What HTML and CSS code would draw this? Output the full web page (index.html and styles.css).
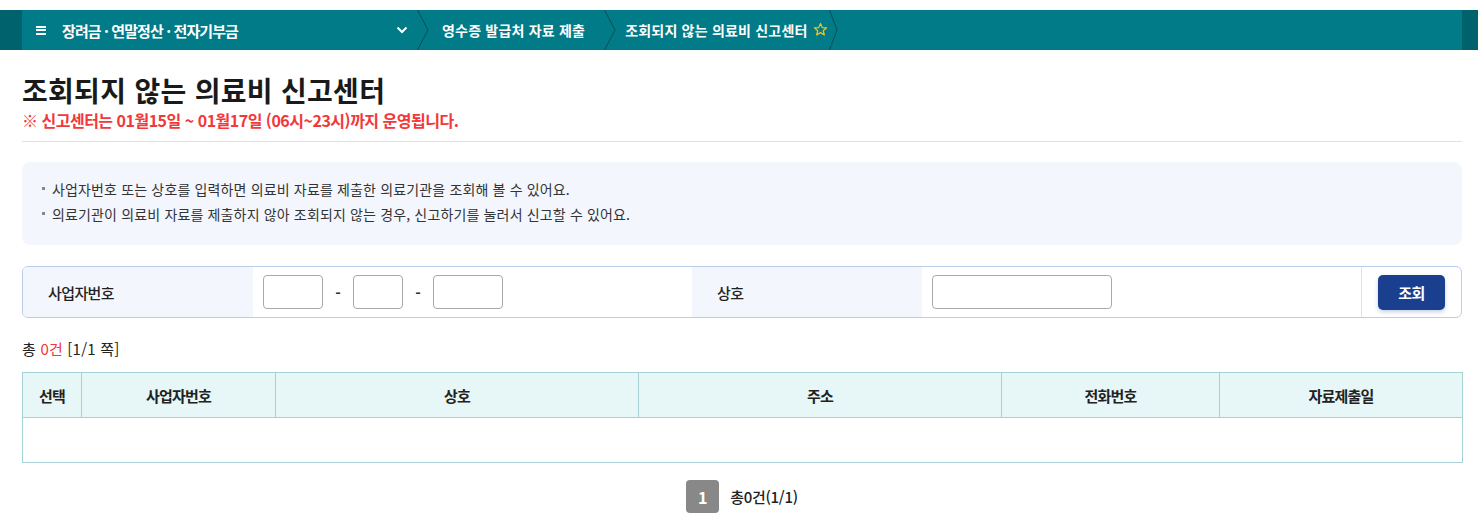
FILE: index.html
```html
<!DOCTYPE html>
<html lang="ko">
<head>
<meta charset="utf-8">
<title>조회되지 않는 의료비 신고센터</title>
<link rel="stylesheet" href="styles.css">
</head>
<body>
<div class="topbar">
  <nav class="crumbs">
    <div class="crumb crumb-menu">
      <span class="hamburger"><i></i><i></i><i></i></span>
      <span class="menu-title">장려금 · 연말정산 · 전자기부금</span>
      <svg class="caret" width="12" height="8" viewBox="0 0 12 8"><polyline points="1.5,1.5 6,6 10.5,1.5" fill="none" stroke="#fff" stroke-width="2"/></svg>
    </div>
    <svg class="sep" width="12" height="40" viewBox="0 0 12 40"><polyline points="0.5,0 11,20 0.5,40" fill="none" stroke="#0b4e58" stroke-width="1"/></svg>
    <div class="crumb crumb-2">영수증 발급처 자료 제출</div>
    <svg class="sep" width="12" height="40" viewBox="0 0 12 40"><polyline points="0.5,0 11,20 0.5,40" fill="none" stroke="#0b4e58" stroke-width="1"/></svg>
    <div class="crumb crumb-3">조회되지 않는 의료비 신고센터
      <svg class="star" width="15" height="15" viewBox="0 0 24 24"><polygon points="12,2.5 14.8,9 21.8,9.4 16.4,13.9 18.1,20.8 12,17 5.9,20.8 7.6,13.9 2.2,9.4 9.2,9" fill="none" stroke="#f6c21b" stroke-width="2" stroke-linejoin="round"/></svg>
    </div>
    <svg class="sep" width="12" height="40" viewBox="0 0 12 40"><polyline points="0.5,0 8,20 0.5,40" fill="none" stroke="#0b4e58" stroke-width="1"/></svg>
  </nav>
</div>

<main class="page">
  <h1 class="title">조회되지 않는 의료비 신고센터</h1>
  <p class="notice">※ 신고센터는 01월15일 ~ 01월17일 (06시~23시)까지 운영됩니다.</p>
  <hr class="rule">

  <ul class="info">
    <li>사업자번호 또는 상호를 입력하면 의료비 자료를 제출한 의료기관을 조회해 볼 수 있어요.</li>
    <li>의료기관이 의료비 자료를 제출하지 않아 조회되지 않는 경우, 신고하기를 눌러서 신고할 수 있어요.</li>
  </ul>

  <div class="search">
    <div class="label">사업자번호</div>
    <div class="field">
      <input class="in in-1" type="text">
      <span class="dash">-</span>
      <input class="in in-2" type="text">
      <span class="dash">-</span>
      <input class="in in-3" type="text">
    </div>
    <div class="label">상호</div>
    <div class="field">
      <input class="in in-name" type="text">
    </div>
    <div class="btn-cell"><button class="btn" type="button">조회</button></div>
  </div>

  <p class="count">총 <span class="red">0건</span> [1/1 쪽]</p>

  <table class="grid">
    <colgroup>
      <col class="c1"><col class="c2"><col class="c3"><col class="c4"><col class="c5"><col class="c6">
    </colgroup>
    <thead>
      <tr><th>선택</th><th>사업자번호</th><th>상호</th><th>주소</th><th>전화번호</th><th>자료제출일</th></tr>
    </thead>
    <tbody>
      <tr class="empty"><td colspan="6"></td></tr>
    </tbody>
  </table>

  <div class="pager">
    <span class="page-num">1</span>
    <span class="page-total">총0건(1/1)</span>
  </div>
</main>
</body>
</html>
```

FILE: styles.css
```css
* { box-sizing: border-box; }
html, body { margin: 0; padding: 0; background: #fff; }
body {
  font-family: "Noto Sans CJK KR", "Noto Sans", sans-serif;
  color: #222;
}

.topbar {
  margin-top: 10px;
  height: 40px;
  background: #00626c;
  padding: 0 16px 0 22px;
}
.crumbs {
  height: 40px;
  background: #007b87;
  display: flex;
  align-items: center;
  color: #fff;
}
.crumb {
  display: flex;
  align-items: center;
  height: 40px;
  white-space: nowrap;
  font-size: 14px;
  font-weight: 700;
  letter-spacing: 0.2px;
}
.crumb-menu { width: 395px; padding-left: 14px; }
.hamburger {
  display: flex;
  flex-direction: column;
  justify-content: space-between;
  width: 10px;
  height: 9px;
  margin-right: 16px;
}
.hamburger i { display: block; height: 2px; background: #fff; }
.menu-title { font-size: 15px; letter-spacing: -0.9px; flex: 1; }
.caret { margin-right: 9px; }
.sep { flex: none; display: block; }
.crumb-2 { padding: 0 19px 0 13px; }
.crumb-3 { padding: 0 1px 0 9px; }
.star { margin-left: 5px; margin-top: -2px; }

.page { width: 1440px; margin-left: 22px; }

.title {
  margin: 21px 0 0;
  font-size: 28px;
  line-height: 38px;
  font-weight: 700;
  color: #1a1a1a;
  letter-spacing: 0.3px;
}
.notice {
  margin: 0;
  font-size: 16px;
  line-height: 22px;
  font-weight: 700;
  color: #f2383a;
  letter-spacing: -0.5px;
}
.rule {
  margin: 10px 0 0;
  border: 0;
  border-top: 1px solid #e2e2e2;
  height: 0;
}

.info {
  list-style: none;
  margin: 20px 0 0;
  padding: 15px 20px 18px;
  background: #f3f6fd;
  border-radius: 8px;
}
.info li {
  position: relative;
  padding-left: 10px;
  font-size: 14px;
  line-height: 25px;
  color: #333;
  letter-spacing: 0.15px;
}
.info li::before {
  content: "";
  position: absolute;
  left: 0;
  top: 10px;
  width: 3px;
  height: 3px;
  background: #888;
}

.search {
  margin-top: 21px;
  display: grid;
  grid-template-columns: 230px 1fr 230px 1fr 100px;
  height: 52px;
  border: 1px solid #bccde9;
  border-radius: 6px;
  overflow: hidden;
}
.label {
  background: #f3f6fd;
  display: flex;
  align-items: center;
  padding-left: 25px;
  font-size: 15px;
  font-weight: 500;
  color: #222;
  letter-spacing: -0.6px;
}
.field {
  display: flex;
  align-items: center;
  padding-left: 10px;
}
.in {
  height: 34px;
  border: 1px solid #a9a9a9;
  border-radius: 4px;
  background: #fff;
  padding: 0 6px;
  font: inherit;
}
.in-1 { width: 60px; }
.in-2 { width: 50px; }
.in-3 { width: 70px; }
.in-name { width: 180px; }
.dash {
  width: 30px;
  text-align: center;
  font-size: 15px;
  font-weight: 700;
  color: #333;
}
.btn-cell {
  border-left: 1px solid #dde3ee;
  display: flex;
  align-items: center;
  justify-content: center;
}
.btn {
  width: 67px;
  height: 35px;
  border: 0;
  border-radius: 5px;
  background: #1b3f8f;
  color: #fff;
  font-family: inherit;
  font-size: 15px;
  font-weight: 700;
  letter-spacing: -0.5px;
  box-shadow: 0 2px 4px rgba(27, 63, 143, 0.25);
}

.count {
  margin: 21px 0 0;
  font-size: 15px;
  line-height: 20px;
  color: #222;
  letter-spacing: 0.2px;
}
.red { color: #f2383a; }

.grid {
  margin-top: 13px;
  width: 1440px;
  border-collapse: collapse;
  table-layout: fixed;
}
.c1 { width: 59px; }
.c2 { width: 194px; }
.c3 { width: 363px; }
.c4 { width: 363px; }
.c5 { width: 218px; }
.c6 { width: 243px; }
.grid th, .grid td {
  border: 1px solid #a8d1d6;
}
.grid th {
  height: 45px;
  background: #e7f6f6;
  font-size: 15px;
  font-weight: 700;
  color: #222;
  letter-spacing: -0.8px;
}
.grid td { height: 45px; }

.pager {
  margin-top: 17px;
  display: flex;
  justify-content: center;
  align-items: center;
  gap: 11px;
}
.page-num {
  width: 33px;
  height: 33px;
  border-radius: 4px;
  background: #888;
  color: #fff;
  font-size: 16px;
  font-weight: 700;
  display: flex;
  align-items: center;
  justify-content: center;
}
.page-total {
  font-size: 15px;
  font-weight: 500;
  color: #222;
  letter-spacing: -0.3px;
}
```
